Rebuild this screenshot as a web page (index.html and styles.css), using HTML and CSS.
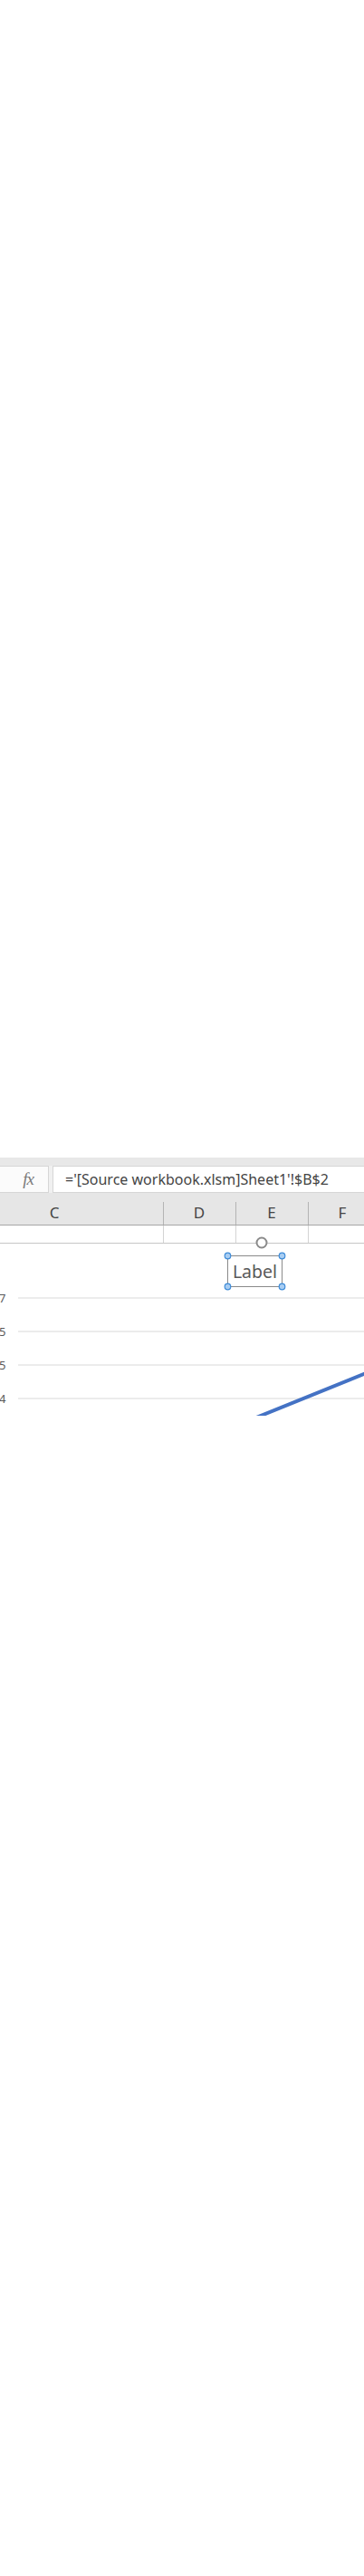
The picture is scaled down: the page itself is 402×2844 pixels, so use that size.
FILE: index.html
```html
<!DOCTYPE html>
<html>
<head>
<meta charset="utf-8">
<link rel="stylesheet" href="styles.css">
</head>
<body>
<div class="blank-top"></div>
<div class="ribbon-strip"></div>
<div class="formula-bar">
  <div class="fx-box"><span class="fx">fx</span></div>
  <div class="formula-input">='[Source workbook.xlsm]Sheet1'!$B$2</div>
</div>
<div class="col-header">
  <div class="col col-c"><span>C</span></div>
  <div class="col col-d sep"><span>D</span></div>
  <div class="col col-e sep"><span>E</span></div>
  <div class="col col-f sep"><span>F</span></div>
</div>
<div class="row">
  <div class="cell col-c"></div>
  <div class="cell col-d"></div>
  <div class="cell col-e"></div>
  <div class="cell col-f"></div>
</div>
<div class="chart">
  <svg class="chart-svg" width="402" height="190" viewBox="0 0 402 190">
    <defs>
      <clipPath id="plot"><rect x="0" y="0" width="402" height="190"/></clipPath>
    </defs>
    <g class="grid">
      <line x1="20" y1="60" x2="402" y2="60"/>
      <line x1="20" y1="97" x2="402" y2="97"/>
      <line x1="20" y1="134" x2="402" y2="134"/>
      <line x1="20" y1="171" x2="402" y2="171"/>
    </g>
    <g class="axis">
      <text x="-1" y="64.5">7</text>
      <text x="-1" y="101.5">5</text>
      <text x="-1" y="138.5">5</text>
      <text x="-1" y="175.5">4</text>
    </g>
    <line class="series" clip-path="url(#plot)" x1="270" y1="197.3" x2="410" y2="140.7"/>
    <rect class="label-box" x="251.5" y="13.5" width="60" height="34"/>
    <text class="label-text" x="281.5" y="37.5">Label</text>
    <circle class="handle" cx="251.5" cy="13.5" r="3.3"/>
    <circle class="handle" cx="311.5" cy="13.5" r="3.3"/>
    <circle class="handle" cx="251.5" cy="47.5" r="3.3"/>
    <circle class="handle" cx="311.5" cy="47.5" r="3.3"/>
    <circle class="rotate" cx="289" cy="-1" r="5.5"/>
  </svg>
</div>
</body>
</html>
```

FILE: styles.css
```css
html, body {
  margin: 0;
  padding: 0;
  background: #ffffff;
}
body {
  width: 402px;
  height: 2844px;
  overflow: hidden;
  font-family: "Noto Sans", "Open Sans", sans-serif;
  color: #444444;
}
.blank-top {
  height: 1278px;
}
.ribbon-strip {
  height: 9px;
  background: #e8e8e8;
}
.formula-bar {
  display: flex;
  height: 30px;
  background: #f0f0f0;
  gap: 4px;
}
.fx-box {
  width: 54px;
  box-sizing: border-box;
  border: 1px solid #d6d6d6;
  border-left: none;
  background: #fbfbfb;
  display: flex;
  align-items: center;
  justify-content: flex-end;
  padding-right: 16px;
}
.fx {
  font-family: "Liberation Serif", "DejaVu Serif", serif;
  font-style: italic;
  font-size: 19px;
  color: #7a7a7a;
  letter-spacing: -1px;
}
.formula-input {
  flex: 1;
  box-sizing: border-box;
  border: 1px solid #d6d6d6;
  border-right: none;
  background: #ffffff;
  padding-left: 13px;
  font-size: 16px;
  line-height: 28px;
  white-space: nowrap;
  overflow: hidden;
  color: #444444;
}
.col-header {
  display: flex;
  height: 35px;
  background: #e6e6e6;
  border-bottom: 1px solid #a6a6a6;
}
.col {
  display: flex;
  align-items: center;
  justify-content: center;
  font-size: 17px;
  color: #444444;
  padding-top: 8px;
  box-sizing: border-box;
}
.col.sep {
  background: linear-gradient(#b4b4b4, #b4b4b4) left 10px / 1px calc(100% - 10px) no-repeat;
}
.col-c { width: 180px; }
.col-c span { margin-right: 60px; }
.col-d { width: 80px; }
.col-e { width: 80px; }
.col-f { flex: 1; }
.col-f span { margin-left: 14px; }
.row {
  display: flex;
  height: 19px;
  border-bottom: 1px solid #c6c6c6;
}
.cell {
  box-sizing: border-box;
}
.cell.col-d, .cell.col-e, .cell.col-f {
  border-left: 1px solid #d4d4d4;
}
.chart {
  position: relative;
  height: 190px;
}
.chart-svg {
  display: block;
  overflow: visible;
}
.grid line {
  stroke: #d9d9d9;
  stroke-width: 1;
}
.axis text {
  font-family: "Noto Sans", "Open Sans", sans-serif;
  font-size: 13px;
  fill: #595959;
}
.series {
  stroke: #4472c4;
  stroke-width: 4;
  stroke-linecap: round;
}
.label-box {
  fill: #ffffff;
  stroke: #8a8a8a;
  stroke-width: 1;
}
.label-text {
  font-family: "Noto Sans", "Open Sans", sans-serif;
  font-size: 19.5px;
  fill: #595959;
  text-anchor: middle;
}
.handle {
  fill: #a8cdf2;
  stroke: #3d8bd8;
  stroke-width: 1.2;
}
.rotate {
  fill: #ffffff;
  stroke: #8a8a8a;
  stroke-width: 2;
}
```
